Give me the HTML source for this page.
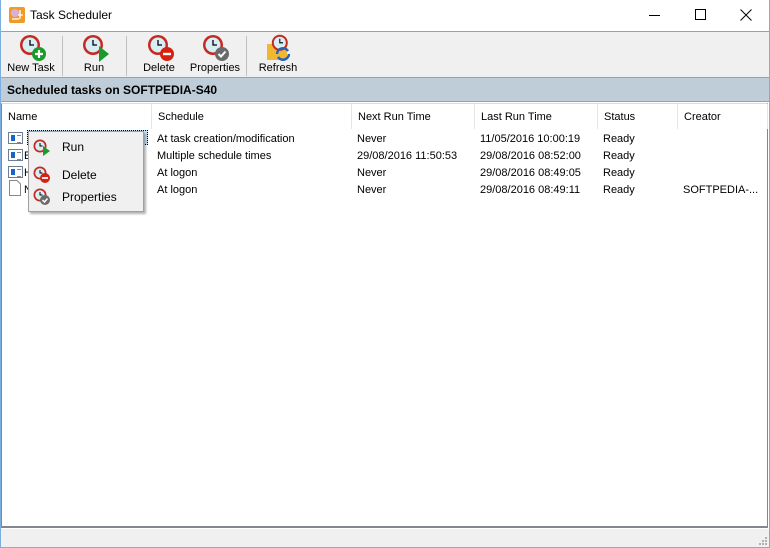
<!DOCTYPE html>
<html><head><style>
*{margin:0;padding:0;box-sizing:border-box}
body{width:770px;height:548px;overflow:hidden;background:#fff;font-family:"Liberation Sans",sans-serif;font-size:11px;color:#000;position:relative}
.abs{position:absolute}
#win{position:absolute;left:0;top:0;width:770px;height:548px;border:1px solid #7eaee0;border-top:none}
.tb{position:absolute;top:31px;left:1px;width:768px;height:47px;background:#f0f0f0;border-top:1px solid #a0a0a0;border-bottom:1px solid #a0a0a0}
.btn{position:absolute;top:0;height:46px;text-align:center;font-size:11px}
.btn span{position:absolute;left:0;right:0;top:30px}
.btn svg{position:absolute;top:2px}
.sep{position:absolute;top:4px;width:1px;height:40px;background:#c0c0c0}
.hdr{position:absolute;top:78px;left:1px;width:768px;height:24px;background:#bfcdd9;border-bottom:1px solid #a0a0a0;font-weight:bold;font-size:12px;padding:5px 6px}
.list{position:absolute;top:103px;left:1px;width:767px;height:425px;border:1px solid #828790;border-top:1px solid #dcdcdc;border-right:1px solid #828790;border-bottom:2px solid #828790}
.col{position:absolute;top:0;height:25px;border-right:1px solid #e5e5e5;padding-top:7px;padding-left:6px}
.cell{position:absolute;white-space:nowrap}
.status{position:absolute;top:529px;left:1px;width:768px;height:18px;background:#f0f0f0}
.menu{position:absolute;left:28px;top:131px;width:116px;height:81px;background:#f0f0f0;border:1px solid #a0a0a0;box-shadow:2px 2px 2px rgba(0,0,0,.3)}
.mi{position:absolute;left:33px;font-size:12px}
.ti{position:absolute;left:8px;width:15px;height:12px;border:1px solid #6d7f96;background:#fff}
.ti:before{content:"";position:absolute;left:2px;top:2px;width:4px;height:6px;background:#1a63c9}
.ti:after{content:"";position:absolute;left:8px;top:2px;width:4px;height:6px;border-top:1px solid #888;border-bottom:1px solid #888}
</style></head><body>
<svg width="0" height="0" style="position:absolute">
<defs>
<g id="clk"><circle cx="11" cy="11" r="10" fill="#c42a22"/><circle cx="11" cy="11" r="7.5" fill="#d8eef5"/><path d="M11 6V11H15" stroke="#000" stroke-width="1.3" fill="none"/></g>
<g id="sclk"><circle cx="7" cy="7" r="6.5" fill="#c42a22"/><circle cx="7" cy="7" r="4.8" fill="#d8eef5"/><path d="M7 4V7H9.5" stroke="#000" stroke-width="1" fill="none"/></g>
</defs></svg>
<div id="win"></div>
<svg class="abs" style="left:8px;top:6px" width="18" height="18"><rect x="1" y="1" width="16" height="16" rx="2" fill="#f09a28"/><circle cx="7" cy="7" r="4" fill="#d8b0d8"/><path d="M12 4v9M10 9h5M4 13h7" stroke="#fff" stroke-width="1.3"/></svg>
<div class="abs" style="left:30px;top:8px;font-size:12px">Task Scheduler</div>
<div class="abs" style="left:649px;top:15px;width:11px;height:1px;background:#000"></div>
<div class="abs" style="left:695px;top:9px;width:11px;height:11px;border:1px solid #000"></div>
<svg class="abs" style="left:740px;top:9px" width="12" height="12"><path d="M0.5 0.5L11.5 11.5M11.5 0.5L0.5 11.5" stroke="#000" stroke-width="1"/></svg>

<div class="tb">
 <div class="btn" style="left:4px;width:52px"><svg style="left:14px" width="28" height="28"><use href="#clk"/><circle cx="20" cy="20" r="7" fill="#1a9a2a"/><path d="M20 16v8M16 20h8" stroke="#fff" stroke-width="2.2"/></svg><span>New Task</span></div>
 <div class="sep" style="left:61px"></div>
 <div class="btn" style="left:68px;width:50px"><svg style="left:13px" width="28" height="28"><use href="#clk"/><path d="M17 12L27 20L17 28Z" fill="#1a9a2a"/></svg><span>Run</span></div>
 <div class="sep" style="left:125px"></div>
 <div class="btn" style="left:136px;width:44px"><svg style="left:10px" width="28" height="28"><use href="#clk"/><circle cx="20" cy="20" r="7" fill="#d62010"/><path d="M16 20h8" stroke="#fff" stroke-width="2.4"/></svg><span>Delete</span></div>
 <div class="btn" style="left:185px;width:58px"><svg style="left:16px" width="28" height="28"><use href="#clk"/><circle cx="20" cy="20" r="7" fill="#6a6a6a"/><path d="M16.5 20l2.5 2.5 4.5-5" stroke="#fff" stroke-width="2" fill="none"/></svg><span>Properties</span></div>
 <div class="sep" style="left:245px"></div>
 <div class="btn" style="left:254px;width:46px"><svg style="left:10px" width="28" height="28"><path d="M2 10h8l2 2h10v14H2z" fill="#f0b830"/><use href="#clk" transform="translate(6,0) scale(.8)"/><path d="M12 20a6 6 0 0 1 11-3M24 20a6 6 0 0 1-11 3" stroke="#2a5fc0" stroke-width="2.5" fill="none"/></svg><span>Refresh</span></div>
</div>
<div class="hdr">Scheduled tasks on SOFTPEDIA-S40</div>
<div class="list">
 <div class="col" style="left:0;width:150px">Name</div>
 <div class="col" style="left:150px;width:200px">Schedule</div>
 <div class="col" style="left:350px;width:123px">Next Run Time</div>
 <div class="col" style="left:473px;width:123px">Last Run Time</div>
 <div class="col" style="left:596px;width:80px">Status</div>
 <div class="col" style="left:676px;width:90px">Creator</div>
</div>
<div class="ti" style="top:132px"></div>
<div class="ti" style="top:149px"></div><div class="cell" style="left:24px;top:150px">E</div>
<div class="ti" style="top:166px"></div><div class="cell" style="left:24px;top:167px">H</div>
<svg class="abs" style="left:9px;top:180px" width="12" height="16"><path d="M0.5 0.5H8L11.5 4V15.5H0.5Z" fill="#fff" stroke="#888"/></svg><div class="cell" style="left:24px;top:184px">N</div>
<div class="abs" style="left:27px;top:130px;width:121px;height:15px;border:1px dotted #000;background:#cce4f7"></div>

<div class="cell" style="left:157px;top:133px">At task creation/modification</div>
<div class="cell" style="left:157px;top:150px">Multiple schedule times</div>
<div class="cell" style="left:157px;top:167px">At logon</div>
<div class="cell" style="left:157px;top:184px">At logon</div>
<div class="cell" style="left:357px;top:133px">Never</div>
<div class="cell" style="left:357px;top:150px">29/08/2016 11:50:53</div>
<div class="cell" style="left:357px;top:167px">Never</div>
<div class="cell" style="left:357px;top:184px">Never</div>
<div class="cell" style="left:480px;top:133px">11/05/2016 10:00:19</div>
<div class="cell" style="left:480px;top:150px">29/08/2016 08:52:00</div>
<div class="cell" style="left:480px;top:167px">29/08/2016 08:49:05</div>
<div class="cell" style="left:480px;top:184px">29/08/2016 08:49:11</div>
<div class="cell" style="left:603px;top:133px">Ready</div>
<div class="cell" style="left:603px;top:150px">Ready</div>
<div class="cell" style="left:603px;top:167px">Ready</div>
<div class="cell" style="left:603px;top:184px">Ready</div>
<div class="cell" style="left:683px;top:184px">SOFTPEDIA-...</div>

<div class="menu">
 <svg class="abs" style="left:4px;top:7px" width="20" height="18"><use href="#sclk"/><path d="M10 7L17 12L10 17Z" fill="#1a9a2a"/></svg>
 <div class="mi" style="top:8px">Run</div>
 <svg class="abs" style="left:4px;top:34px" width="20" height="18"><use href="#sclk"/><circle cx="12" cy="12" r="5" fill="#d62010"/><path d="M9 12h6" stroke="#fff" stroke-width="1.8"/></svg>
 <div class="mi" style="top:36px">Delete</div>
 <svg class="abs" style="left:4px;top:56px" width="20" height="18"><use href="#sclk"/><circle cx="12" cy="12" r="5" fill="#6a6a6a"/><path d="M9.5 12l2 2 3-3.5" stroke="#fff" stroke-width="1.5" fill="none"/></svg>
 <div class="mi" style="top:58px">Properties</div>
</div>
<div class="status"></div>
<svg class="abs" style="left:759px;top:537px" width="9" height="9" fill="#b0b0b0"><rect x="6" y="0" width="2" height="2"/><rect x="3" y="3" width="2" height="2"/><rect x="6" y="3" width="2" height="2"/><rect x="0" y="6" width="2" height="2"/><rect x="3" y="6" width="2" height="2"/><rect x="6" y="6" width="2" height="2"/></svg>
</body></html>
